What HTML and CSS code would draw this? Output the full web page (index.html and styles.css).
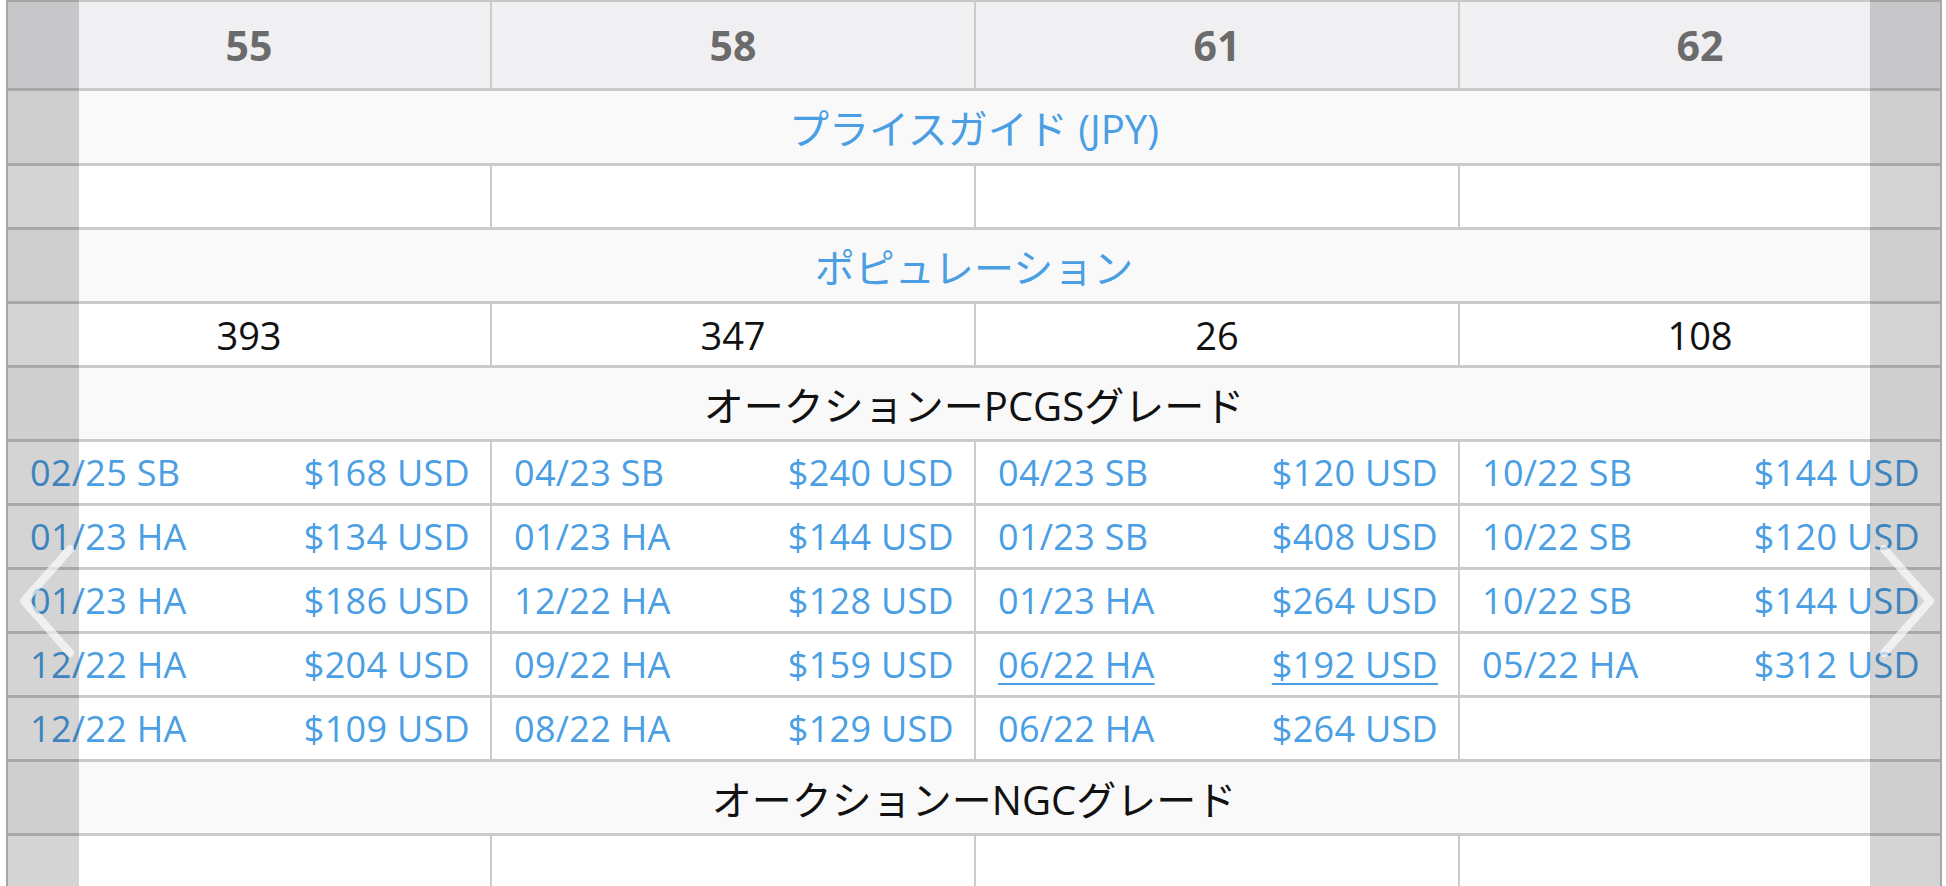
FILE: index.html
```html
<!DOCTYPE html>
<html lang="ja">
<head>
  <meta charset="UTF-8">
  <meta name="viewport" content="width=device-width, initial-scale=1">
  <title>グレード別価格</title>
  <link rel="stylesheet" href="styles.css">
</head>
<body>

  <!-- Grade carousel -->
  <div class="carousel">
    <table class="grade-table">
      <colgroup>
        <col class="grade-col">
        <col class="grade-col">
        <col class="grade-col">
        <col>
      </colgroup>
      <thead>
        <tr class="grade-row">
          <th>55</th>
          <th>58</th>
          <th>61</th>
          <th>62</th>
        </tr>
      </thead>
      <tbody>
        <tr class="section-row first">
          <td colspan="4" class="section-title link">プライスガイド (JPY)</td>
        </tr>
        <tr class="data-row">
          <td></td><td></td><td></td><td></td>
        </tr>

        <tr class="section-row">
          <td colspan="4" class="section-title link">ポピュレーション</td>
        </tr>
        <tr class="data-row pop-row">
          <td>393</td>
          <td>347</td>
          <td>26</td>
          <td>108</td>
        </tr>

        <tr class="section-row">
          <td colspan="4" class="section-title">オークションーPCGSグレード</td>
        </tr>
        <tr class="data-row">
          <td><div class="sale"><span>02/25 SB</span><span>$168 USD</span></div></td>
          <td><div class="sale"><span>04/23 SB</span><span>$240 USD</span></div></td>
          <td><div class="sale"><span>04/23 SB</span><span>$120 USD</span></div></td>
          <td><div class="sale"><span>10/22 SB</span><span>$144 USD</span></div></td>
        </tr>
        <tr class="data-row">
          <td><div class="sale"><span>01/23 HA</span><span>$134 USD</span></div></td>
          <td><div class="sale"><span>01/23 HA</span><span>$144 USD</span></div></td>
          <td><div class="sale"><span>01/23 SB</span><span>$408 USD</span></div></td>
          <td><div class="sale"><span>10/22 SB</span><span>$120 USD</span></div></td>
        </tr>
        <tr class="data-row">
          <td><div class="sale"><span>01/23 HA</span><span>$186 USD</span></div></td>
          <td><div class="sale"><span>12/22 HA</span><span>$128 USD</span></div></td>
          <td><div class="sale"><span>01/23 HA</span><span>$264 USD</span></div></td>
          <td><div class="sale"><span>10/22 SB</span><span>$144 USD</span></div></td>
        </tr>
        <tr class="data-row">
          <td><div class="sale"><span>12/22 HA</span><span>$204 USD</span></div></td>
          <td><div class="sale"><span>09/22 HA</span><span>$159 USD</span></div></td>
          <td><div class="sale active"><span>06/22 HA</span><span>$192 USD</span></div></td>
          <td><div class="sale"><span>05/22 HA</span><span>$312 USD</span></div></td>
        </tr>
        <tr class="data-row">
          <td><div class="sale"><span>12/22 HA</span><span>$109 USD</span></div></td>
          <td><div class="sale"><span>08/22 HA</span><span>$129 USD</span></div></td>
          <td><div class="sale"><span>06/22 HA</span><span>$264 USD</span></div></td>
          <td></td>
        </tr>

        <tr class="section-row">
          <td colspan="4" class="section-title">オークションーNGCグレード</td>
        </tr>
        <tr class="data-row">
          <td></td><td></td><td></td><td></td>
        </tr>
      </tbody>
    </table>

    <!-- Prev / next overlays -->
    <div class="nav nav-prev">
      <svg class="chevron" width="60" height="120" viewBox="0 0 60 120">
        <polyline points="54,6 8,58 54,110" />
      </svg>
    </div>
    <div class="nav nav-next">
      <svg class="chevron" width="60" height="120" viewBox="0 0 60 120">
        <polyline points="10,6 56,58 10,110" />
      </svg>
    </div>
  </div>

</body>
</html>
```

FILE: styles.css
```css
/* Reset */
* {
  box-sizing: border-box;
  margin: 0;
  padding: 0;
}

body {
  font-family: "Open Sans", "Noto Sans CJK JP", sans-serif;
  background-color: #fff;
  color: #111;
  overflow: hidden;
}

/* Carousel wrapper */
.carousel {
  position: relative;
  width: 1936px;
  margin-left: 6px;
}

/* Table */
.grade-table {
  width: 100%;
  table-layout: fixed;
  border-collapse: separate;
  border-spacing: 0;
  border: 2px solid #c8c8c8;
  border-bottom: none;
}

.grade-col {
  width: 484px;
}

.grade-table th,
.grade-table td {
  border-bottom: 3px solid #cbcbcb;
  border-right: 2px solid #cbcbcb;
  text-align: center;
  vertical-align: middle;
  font-weight: normal;
}

.grade-table th:last-child,
.grade-table td:last-child {
  border-right: none;
}

/* Grade header */
.grade-row th {
  height: 89px;
  background-color: #f0f0f2;
  color: #6b6b6b;
  font-size: 41px;
  font-weight: bold;
}

/* Section titles */
.section-row td {
  height: 74px;
  background-color: #f9f9f9;
  font-size: 40px;
  color: #111;
}

.section-row.first td {
  height: 75px;
}

.section-title.link {
  color: #4a9ee4;
}

/* Data rows */
.data-row td {
  height: 64px;
  background-color: #fff;
}

.pop-row td {
  font-size: 38px;
  color: #111;
}

.sale {
  display: flex;
  justify-content: space-between;
  align-items: center;
  padding: 0 20px 0 22px;
  font-size: 36px;
  letter-spacing: 0.3px;
  color: #4a9ee4;
  white-space: nowrap;
}

.sale.active span {
  text-decoration: underline;
  text-underline-offset: 5px;
  text-decoration-thickness: 2px;
}

/* Grey prev/next strips over the table */
.nav {
  position: absolute;
  top: 0;
  bottom: 0;
  width: 73px;
  background-color: rgba(0, 0, 0, 0.17);
}

.nav-prev {
  left: 0;
}

.nav-next {
  right: 0;
  width: 72px;
}

.chevron {
  position: absolute;
  top: 543px;
}

.nav-prev .chevron {
  left: 10px;
}

.nav-next .chevron {
  left: 4px;
}

.chevron polyline {
  fill: none;
  stroke: rgba(255, 255, 255, 0.65);
  stroke-width: 8;
  stroke-linecap: round;
  stroke-linejoin: round;
}
```
